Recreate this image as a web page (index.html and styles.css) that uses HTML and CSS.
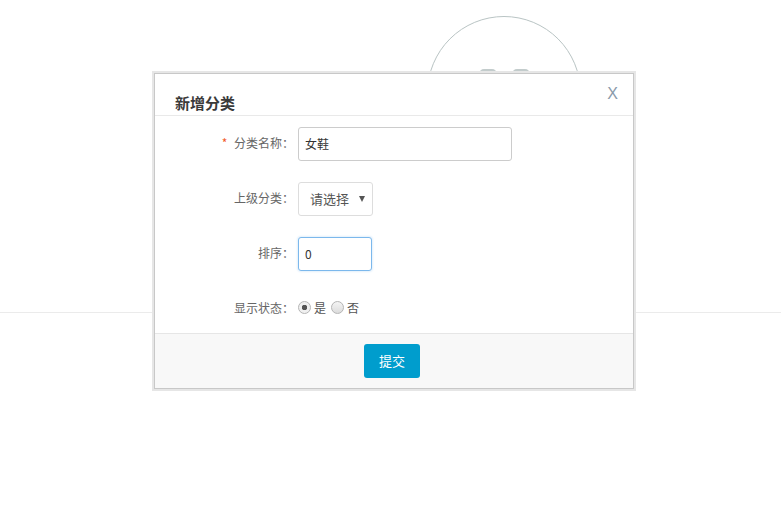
FILE: index.html
```html
<!DOCTYPE html>
<html lang="zh-CN">
<head>
    <meta charset="UTF-8">
    <title>新增分类</title>
    <link rel="stylesheet" href="styles.css">
</head>
<body>
    <div class="page">
        <div class="avatar">
            <span class="avatar-mark"></span>
            <span class="avatar-mark"></span>
        </div>
        <div class="divider"></div>
    </div>

    <div class="dialog">
        <div class="dialog-head">
            <h3>新增分类</h3>
            <span class="dialog-close">X</span>
        </div>
        <form class="dialog-body">
            <div class="form-row">
                <label class="form-label"><em>*</em> 分类名称：</label>
                <input class="text-input wide" type="text" value="女鞋">
            </div>
            <div class="form-row">
                <label class="form-label">上级分类：</label>
                <div class="select-box">
                    <select>
                        <option>请选择</option>
                    </select>
                </div>
            </div>
            <div class="form-row">
                <label class="form-label">排序：</label>
                <input class="text-input short focus" type="text" value="0">
            </div>
            <div class="form-row">
                <label class="form-label">显示状态：</label>
                <div class="radio-group">
                    <input type="radio" name="show" checked> <span>是</span>
                    <input type="radio" name="show"> <span>否</span>
                </div>
            </div>
        </form>
        <div class="dialog-foot">
            <button class="btn-submit" type="button">提交</button>
        </div>
    </div>
</body>
</html>
```

FILE: styles.css
```css
body {
    margin: 0;
    background: #fff;
    font-family: "Noto Sans CJK SC", "Noto Sans", sans-serif;
    font-size: 12px;
    color: #666;
}

.page {
    padding-top: 16px;
}

/* background content behind the modal */
.avatar {
    width: 154px;
    height: 154px;
    margin-left: 427px;
    border: 1px solid #b9c4c4;
    border-radius: 50%;
    box-sizing: border-box;
    display: flex;
    justify-content: center;
    gap: 15px;
    padding-top: 52px;
}

.avatar-mark {
    width: 14px;
    height: 10px;
    border: 2px solid #c3cccc;
    border-radius: 5px 5px 0 0;
}

.divider {
    margin-top: 142px;
    border-top: 1px solid #ebebeb;
}

/* modal */
.dialog {
    position: absolute;
    left: 152px;
    top: 71px;
    width: 478px;
    background: #fff;
    border: 1px solid #c8c8c8;
    box-shadow: 0 0 0 2px #e6e6e6;
    margin: 2px;
}

.dialog-head {
    position: relative;
    height: 41px;
    border-bottom: 1px solid #e9e9e9;
    padding: 0 20px;
}

.dialog-head h3 {
    margin: 0;
    padding-top: 18px;
    font-size: 15px;
    line-height: 22px;
    color: #3a3a3a;
}

.dialog-close {
    position: absolute;
    right: 15px;
    top: 11px;
    font-family: "Liberation Sans", sans-serif;
    font-size: 16px;
    color: #8a9aaa;
}

.dialog-body {
    margin: 0;
    padding: 11px 0 7px;
    display: flex;
    flex-direction: column;
    gap: 21px;
}

.form-row {
    display: flex;
    align-items: center;
    height: 34px;
}

.form-label {
    width: 139px;
    text-align: right;
    margin: 0 4px 3px 0;
    color: #666;
}

.form-label em {
    font-style: normal;
    color: #f25a29;
    margin-right: 4px;
}

.text-input {
    height: 34px;
    box-sizing: border-box;
    border: 1px solid #ccc;
    border-radius: 3px;
    padding: 0 6px 2px;
    font-family: inherit;
    font-size: 12px;
    color: #333;
    outline: none;
}

.text-input.wide {
    width: 214px;
}

.text-input.short {
    width: 74px;
}

.text-input.focus {
    border-color: #7cb8ec;
    box-shadow: 0 0 2px 1px #e3f0fb;
}

.select-box {
    position: relative;
    width: 75px;
    height: 34px;
}

.select-box select {
    width: 100%;
    height: 100%;
    appearance: none;
    border: 1px solid #ddd;
    border-radius: 3px;
    background: #fff;
    padding: 0 0 2px 11px;
    font-family: inherit;
    font-size: 13px;
    color: #555;
}

.select-box::after {
    content: "";
    position: absolute;
    right: 8px;
    top: 14px;
    border-left: 3px solid transparent;
    border-right: 3px solid transparent;
    border-top: 6px solid #555;
}

.radio-group {
    display: flex;
    align-items: center;
    gap: 3px;
    margin-bottom: 3px;
    color: #555;
}

.radio-group input {
    appearance: none;
    width: 13px;
    height: 13px;
    margin: 0;
    border: 1px solid #b5b5b5;
    border-radius: 50%;
    background: linear-gradient(#f4f4f4, #dcdcdc);
    box-sizing: border-box;
}

.radio-group input:checked {
    background: radial-gradient(circle, #555 0 2.5px, #f0f0f0 3px);
}

.radio-group span + input {
    margin-left: 2px;
}

.dialog-foot {
    border-top: 1px solid #e6e6e6;
    background: #f8f8f8;
    padding: 10px 4px 10px 0;
    text-align: center;
}

.btn-submit {
    width: 56px;
    height: 34px;
    border: none;
    border-radius: 3px;
    background: #009dcd;
    color: #fff;
    font-family: inherit;
    font-size: 13px;
    padding: 0 0 2px;
}
```
